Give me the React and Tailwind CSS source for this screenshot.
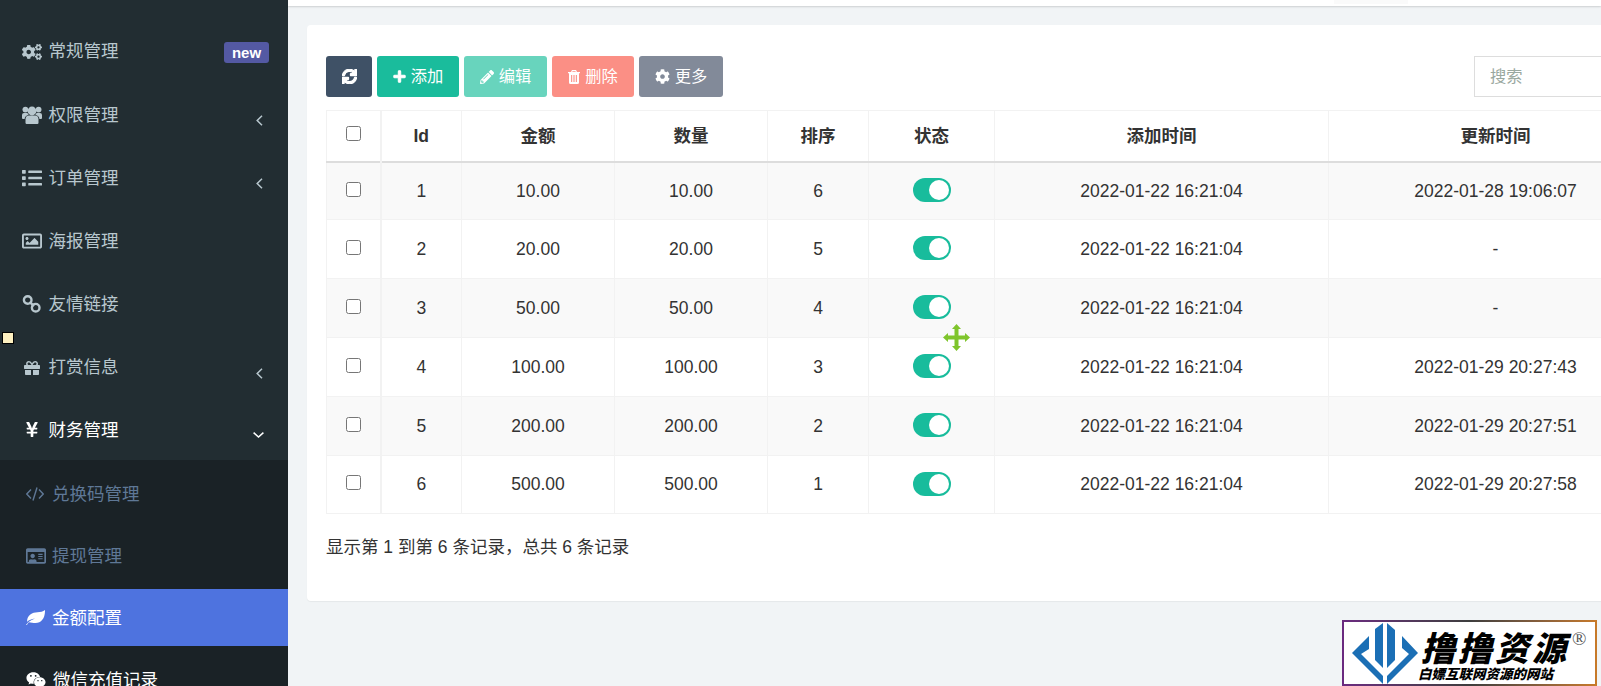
import {
  FaCog,
  FaCogs,
  FaGift,
  FaList,
  FaPencilAlt,
  FaPlus,
  FaRegIdCard,
  FaRegImage,
  FaSync,
  FaWeixin,
  FaYenSign,
} from "react-icons/fa";

// Font Awesome 4 shapes the icon packages no longer carry
function UsersIcon({ className }) {
  return (
    <svg className={className} viewBox="0 0 20 18" fill="currentColor">
      <circle cx="3.4" cy="3.6" r="2.9" />
      <circle cx="16.6" cy="3.6" r="2.9" />
      <circle cx="10" cy="5" r="4.4" />
      <path d="M4.5 18 Q3.5 18 3.5 16.5 L3.5 13.5 Q3.5 9.5 7 9.5 L13 9.5 Q16.5 9.5 16.5 13.5 L16.5 16.5 Q16.5 18 15.5 18 Z" />
      <path d="M0 12 L0 9 Q0 7 2 7 L5.5 7 Q6 8.3 7 9 Q3 9.3 2.6 13 L1 13 Q0 13 0 12 Z" />
      <path d="M20 12 L20 9 Q20 7 18 7 L14.5 7 Q14 8.3 13 9 Q17 9.3 17.4 13 L19 13 Q20 13 20 12 Z" />
    </svg>
  );
}

function LinkIcon({ className }) {
  return (
    <svg className={className} viewBox="0 0 20 20" fill="none" stroke="currentColor" strokeWidth="2.4">
      <circle cx="5.7" cy="6" r="3.8" />
      <circle cx="13.7" cy="13.7" r="3.8" />
      <path d="M7.5 7.8 L12 12" />
    </svg>
  );
}

function CodeIcon({ className }) {
  return (
    <svg className={className} viewBox="0 0 18 14" fill="none" stroke="currentColor" strokeWidth="1.4">
      <path d="M5 2.5 L0.8 7 L5 11.5" />
      <path d="M11 0.5 L7 13.5" />
      <path d="M13 2.5 L17.2 7 L13 11.5" />
    </svg>
  );
}

function LeafIcon({ className }) {
  return (
    <svg className={className} viewBox="0 0 19 15" fill="currentColor">
      <path d="M0 15 C1.5 12.5 4 10.5 9 8.5 C5.5 9 3 10 1.2 11.8 C0.5 6 6 2.2 11.5 2.2 C14.5 2.2 17 1.6 19 0 C19.2 8 15.5 13 9.5 13 C7 13 5 12.8 3 12.3 C2 13 1.3 14 1 15 Z" />
    </svg>
  );
}

function TrashIcon({ className }) {
  return (
    <svg className={className} viewBox="0 0 12 14" fill="currentColor" fillRule="evenodd">
      <path d="M4 0 L8 0 L9 2 L12 2 L12 3.3 L11 3.3 L11 12.5 Q11 14 9.5 14 L2.5 14 Q1 14 1 12.5 L1 3.3 L0 3.3 L0 2 L3 2 Z M4.6 1.2 L4.2 2 L7.8 2 L7.4 1.2 Z M3.1 5 L3.1 12 L4.2 12 L4.2 5 Z M5.45 5 L5.45 12 L6.55 12 L6.55 5 Z M7.8 5 L7.8 12 L8.9 12 L8.9 5 Z" />
    </svg>
  );
}

function CaretLeft({ className }) {
  return (
    <svg className={className} viewBox="0 0 7 11" fill="none" stroke="currentColor" strokeWidth="1.5">
      <path d="M6 0.8 L1.2 5.5 L6 10.2" />
    </svg>
  );
}

function CaretDown({ className }) {
  return (
    <svg className={className} viewBox="0 0 11 6" fill="none" stroke="currentColor" strokeWidth="1.5">
      <path d="M0.6 0.6 L5.5 5 L10.4 0.6" />
    </svg>
  );
}

const menu = [
  { icon: FaCogs, label: "常规管理", size: "w-[20px] h-[20px]", badge: true },
  { icon: UsersIcon, label: "权限管理", size: "w-[20px] h-[18px]", caret: true },
  { icon: FaList, label: "订单管理", size: "w-[20px] h-[20px]", caret: true },
  { icon: FaRegImage, label: "海报管理", size: "w-[20px] h-[20px]" },
  { icon: LinkIcon, label: "友情链接", size: "w-[20px] h-[20px]" },
  { icon: FaGift, label: "打赏信息", size: "w-[20px] h-[16px]", caret: true },
];

const subMenu = [
  { icon: CodeIcon, label: "兑换码管理", color: "text-[#5f7896]", size: "w-[18px] h-[14px]", ml: "ml-[8px]" },
  { icon: FaRegIdCard, label: "提现管理", color: "text-[#5f7896]", size: "w-[20px] h-[20px]", ml: "ml-[6px]" },
  { icon: LeafIcon, label: "金额配置", color: "text-white bg-[#4e73df]", size: "w-[19px] h-[15px]", ml: "ml-[7px]" },
  { icon: FaWeixin, label: "微信充值记录", color: "text-white", size: "w-[20px] h-[20px]", ml: "ml-[7px]" },
];

const rows = [
  { id: 1, amount: "10.00", qty: "10.00", sort: 6, added: "2022-01-22 16:21:04", updated: "2022-01-28 19:06:07", height: "h-[58px]" },
  { id: 2, amount: "20.00", qty: "20.00", sort: 5, added: "2022-01-22 16:21:04", updated: "-", height: "h-[59px]" },
  { id: 3, amount: "50.00", qty: "50.00", sort: 4, added: "2022-01-22 16:21:04", updated: "-", height: "h-[59px]" },
  { id: 4, amount: "100.00", qty: "100.00", sort: 3, added: "2022-01-22 16:21:04", updated: "2022-01-29 20:27:43", height: "h-[59px]" },
  { id: 5, amount: "200.00", qty: "200.00", sort: 2, added: "2022-01-22 16:21:04", updated: "2022-01-29 20:27:51", height: "h-[59px]" },
  { id: 6, amount: "500.00", qty: "500.00", sort: 1, added: "2022-01-22 16:21:04", updated: "2022-01-29 20:27:58", height: "h-[58px]" },
];

const headers = [
  { label: "Id", width: "w-[81px]" },
  { label: "金额", width: "w-[153px]" },
  { label: "数量", width: "w-[153px]" },
  { label: "排序", width: "w-[101px]" },
  { label: "状态", width: "w-[126px]" },
  { label: "添加时间", width: "w-[334px]" },
  { label: "更新时间", width: "w-[334px]" },
];

function Sidebar() {
  return (
    <aside className="w-[288px] h-full shrink-0 bg-[#222d32] text-[#b8c7ce] pt-[20px] overflow-hidden">
      {menu.map((item) => (
        <div key={item.label} className="h-[63.2px] flex items-center pl-[22px] pr-[19px]">
          <span className="w-[20px] flex justify-center shrink-0">
            <item.icon className={item.size} />
          </span>
          <span className="ml-[6.5px] flex-1">{item.label}</span>
          {item.badge && (
            <span className="w-[45px] h-[21px] rounded-[3px] bg-[#5459a3] text-white text-[15px] font-bold leading-[21px] text-center translate-y-px">
              new
            </span>
          )}
          {item.caret && <CaretLeft className="w-[7px] h-[11px] mr-[6px] translate-y-[6px]" />}
        </div>
      ))}
      <div className="h-[61px] flex items-center pl-[22px] pr-[24px] text-white">
        <FaYenSign className="w-[20px] h-[17px] shrink-0" />
        <span className="ml-[6.5px] flex-1">财务管理</span>
        <CaretDown className="w-[11px] h-[6px] translate-y-[5px]" />
      </div>
      <div className="bg-[#1a2226] h-full pt-[5px] flex flex-col gap-[5px]">
        {subMenu.map((item) => (
          <div key={item.label} className={`h-[57px] shrink-0 flex items-center pl-[26px] ${item.color}`}>
            <item.icon className={`${item.size} shrink-0`} />
            <span className={item.ml}>{item.label}</span>
          </div>
        ))}
      </div>
    </aside>
  );
}

function ToolButton({ bg, icon: Icon, iconClass, label, width }) {
  return (
    <button className={`h-[41px] ${width} ${bg} rounded-[3px] text-white text-[16.25px] flex items-center justify-center gap-[5px]`}>
      <Icon className={iconClass} />
      {label && <span>{label}</span>}
    </button>
  );
}

function Toggle() {
  return (
    <div className="w-[38px] h-[24px] mx-auto rounded-full bg-[#18bc9c] flex items-center justify-end pr-[2px] -translate-y-px">
      <div className="w-[20px] h-[20px] rounded-full bg-white" />
    </div>
  );
}

function DataTable() {
  return (
    <table className="table-fixed w-[1336px] border-collapse text-center">
      <thead>
        <tr className="h-[51px] border-b-2 border-[#dddddd]">
          <th className="w-[54px] border border-b-0 border-r-2 border-[#f2f2f2] p-0 font-normal">
            <input type="checkbox" className="w-[15px] h-[15px] align-middle -translate-y-[4px]" />
          </th>
          {headers.map((h) => (
            <th key={h.label} className={`${h.width} border border-b-0 border-[#f2f2f2] p-0 font-bold`}>
              {h.label}
            </th>
          ))}
        </tr>
      </thead>
      <tbody>
        {rows.map((row, i) => (
          <tr key={row.id} className={`${row.height} ${i % 2 === 0 ? "bg-[#f9f9f9]" : "bg-white"}`}>
            <td className="border border-r-2 border-[#f2f2f2] p-0">
              <input type="checkbox" className="w-[15px] h-[15px] align-middle -translate-y-[3px]" />
            </td>
            <td className="border border-[#f2f2f2] p-0">{row.id}</td>
            <td className="border border-[#f2f2f2] p-0">{row.amount}</td>
            <td className="border border-[#f2f2f2] p-0">{row.qty}</td>
            <td className="border border-[#f2f2f2] p-0">{row.sort}</td>
            <td className="border border-[#f2f2f2] p-0">
              <Toggle />
            </td>
            <td className="border border-[#f2f2f2] p-0">{row.added}</td>
            <td className="border border-[#f2f2f2] p-0">{row.updated}</td>
          </tr>
        ))}
      </tbody>
    </table>
  );
}

function Watermark() {
  return (
    <div className="absolute left-[1342px] top-[620px] w-[255px] h-[66px] p-[2px] bg-gradient-to-r from-[#6b2a80] via-[#3d3d3d] to-[#c87a28]">
      <div className="relative w-full h-full bg-white flex overflow-hidden">
        <svg className="w-[79px] h-[62px] shrink-0" viewBox="2 4 79 62" fill="#1b6fb5">
          <path d="M10 35 L27 18 L27 31 L19 36 L41 58 L41 66 Z" />
          <path d="M33 11 L41 5 L41 50 L33 42 Z" />
          <path d="M45 5 L53 12 L53 42 L45 50 Z" />
          <path d="M60 18 L76 35 L45 66 L45 58 L67 36 L60 30 Z" />
        </svg>
        <div className="flex flex-col items-start text-black italic [font-family:'Noto_Sans_CJK_SC',sans-serif] font-black -ml-[2px]">
          <span className="text-[34px] leading-[32px] tracking-[3px] mt-[9px]">撸撸资源</span>
          <span className="text-[13.5px] leading-[14px] mt-[3px] -ml-[3px]">白嫖互联网资源的网站</span>
        </div>
        <span className="absolute left-[228px] top-[7px] text-[19px] leading-none text-[#555555] [font-family:'Liberation_Serif',serif]">
          ®
        </span>
      </div>
    </div>
  );
}

export default function App() {
  return (
    <div className="relative w-[1601px] h-[686px] overflow-hidden flex bg-[#f1f4f6] text-[#333333] text-[17.5px] [font-family:'Liberation_Sans','Noto_Sans_CJK_SC',sans-serif]">
      <Sidebar />
      <main className="flex-1 min-w-0 flex flex-col">
        <div className="h-[6px] shrink-0 bg-white shadow-[0_1px_2px_rgba(0,0,0,0.15)]">
          <div className="ml-[1046px] w-[74px] h-[4px] bg-[#fafafa]" />
        </div>
        <section className="mt-[19px] ml-[19px] w-[1374px] h-[576px] shrink-0 bg-white rounded-[4px] shadow-[0_1px_1px_rgba(0,0,0,0.05)] pt-[31px] px-[19px]">
          <div className="flex justify-between h-[41px] mb-[13px]">
            <div className="flex gap-[5px]">
              <ToolButton bg="bg-[#3f5166]" icon={FaSync} iconClass="w-[15px] h-[15px] stroke-[40px]" width="w-[46px]" />
              <ToolButton bg="bg-[#1abc9c]" icon={FaPlus} iconClass="w-[13px] h-[13px] stroke-[40px]" label="添加" width="w-[82px]" />
              <ToolButton bg="bg-[#68d4bd]" icon={FaPencilAlt} iconClass="w-[14px] h-[14px]" label="编辑" width="w-[83px]" />
              <ToolButton bg="bg-[#fb8f85]" icon={TrashIcon} iconClass="w-[12px] h-[14px]" label="删除" width="w-[82px]" />
              <ToolButton bg="bg-[#828a99]" icon={FaCog} iconClass="w-[15px] h-[15px]" label="更多" width="w-[84px]" />
            </div>
            <input
              placeholder="搜索"
              className="w-[188px] h-[41px] border border-[#dddddd] px-[15px] text-[16.25px] outline-none placeholder:text-[#9aa8a0]"
            />
          </div>
          <DataTable />
          <p className="mt-[20px] leading-[26px]">显示第 1 到第 6 条记录，总共 6 条记录</p>
        </section>
      </main>

      {/* stray marker at the sidebar edge and the drag cursor */}
      <div className="absolute left-[2px] top-[332px] w-[12px] h-[12px] border border-black bg-[#fdf0c0]" />
      <svg className="absolute left-[943px] top-[324px] w-[27px] h-[27px]" viewBox="0 0 27 27">
        <path
          d="M13.5 0 L18 5 L15.5 5 L15.5 11.5 L22 11.5 L22 9 L27 13.5 L22 18 L22 15.5 L15.5 15.5 L15.5 22 L18 22 L13.5 27 L9 22 L11.5 22 L11.5 15.5 L5 15.5 L5 18 L0 13.5 L5 9 L5 11.5 L11.5 11.5 L11.5 5 L9 5 Z"
          fill="#7fc52c"
        />
      </svg>
      <Watermark />
    </div>
  );
}
